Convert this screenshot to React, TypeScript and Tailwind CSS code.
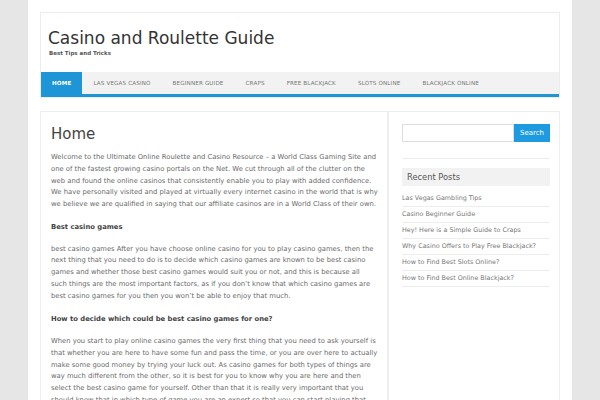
import React from 'react';

const navItems = ['Home', 'Las Vegas Casino', 'Beginner Guide', 'Craps', 'Free Blackjack', 'Slots Online', 'Blackjack Online'];

const recentPosts = [
  'Las Vegas Gambling Tips',
  'Casino Beginner Guide',
  'Hey! Here is a Simple Guide to Craps',
  'Why Casino Offers to Play Free Blackjack?',
  'How to Find Best Slots Online?',
  'How to Find Best Online Blackjack?',
];

const App: React.FC = () => {
  return (
    <div className="min-h-screen bg-[#e6e6e6] font-['DejaVu_Sans',sans-serif]">
      <div className="mx-auto w-[544px] bg-white px-3 pt-3 h-[400px] overflow-hidden">
        {/* Header */}
        <div className="border border-[#ececec]">
          <div className="px-[7px] pt-[14px] h-[59px]">
            <h1 className="text-[17px] leading-[22px] text-[#333]">Casino and Roulette Guide</h1>
            <p className="text-[5.5px] font-bold text-[#555] leading-[8px] pl-[1px]">Best Tips and Tricks</p>
          </div>
          <nav className="flex bg-[#f2f2f2] h-[25px] border-b-[3px] border-[#1e95d6]">
            {navItems.map((item, i) => (
              <span
                key={item}
                className={`flex items-center px-[11px] text-[5.6px] uppercase tracking-[0.15px] ${
                  i === 0 ? 'bg-[#1e95d6] text-white font-bold px-[10px]' : 'text-[#777]'
                }`}
              >
                {item}
              </span>
            ))}
          </nav>
        </div>

        {/* Content */}
        <div className="flex mt-[13px]">
          <div className="w-[350px] border border-[#eeeeee] pl-[10px] pr-[7px] pt-[12px] text-[6.8px] leading-[11.75px] text-[#6a6a6a]">
            <h2 className="text-[15px] leading-[20px] text-[#444] mb-[8px]">Home</h2>
            <p className="mb-[11.5px]">
              Welcome to the Ultimate Online Roulette and Casino Resource – a World Class Gaming Site and one of the fastest growing casino portals on the Net. We cut through all of the clutter on the web and found the online casinos that consistently enable you to play with added confidence. We have personally visited and played at virtually every internet casino in the world that is why we believe we are qualified in saying that our affiliate casinos are in a World Class of their own.
            </p>
            <p className="mb-[9.5px] font-bold text-[#444]">Best casino games</p>
            <p className="mb-[12px] pr-[3px]">
              best casino games After you have choose online casino for you to play casino games, then the next thing that you need to do is to decide which casino games are known to be best casino games and whether those best casino games would suit you or not, and this is because all such things are the most important factors, as if you don’t know that which casino games are best casino games for you then you won’t be able to enjoy that much.
            </p>
            <p className="mb-[10px] font-bold text-[#444]">How to decide which could be best casino games for one?</p>
            <p>
              When you start to play online casino games the very first thing that you need to ask yourself is that whether you are here to have some fun and pass the time, or you are over here to actually make some good money by trying your luck out. As casino games for both types of things are way much different from the other, so it is best for you to know why you are here and then select the best casino game for yourself. Other than that it is really very important that you should know that in which type of game you are an expert so that you can start playing that.
            </p>
          </div>

          <aside className="flex-1 border border-[#eeeeee] pl-[13px] pr-[9px] pt-[12px] h-[300px]">
            <div className="flex pb-[16px] border-b border-[#eeeeee]">
              <div className="w-[112px] h-[18px] border border-[#dddddd]" />
              <button className="w-[36px] h-[18px] bg-[#1e9be0] text-white text-[7px]">Search</button>
            </div>
            <div className="mt-[9px] bg-[#f2f2f2] h-[18px] flex items-center px-[5px] text-[8.3px] text-[#555]">
              Recent Posts
            </div>
            <ul className="mt-[5px] text-[6.4px] text-[#777]">
              {recentPosts.map((post) => (
                <li key={post} className="h-[16px] flex items-center border-b border-[#eeeeee]">
                  {post}
                </li>
              ))}
            </ul>
          </aside>
        </div>
      </div>
    </div>
  );
};

export default App;
